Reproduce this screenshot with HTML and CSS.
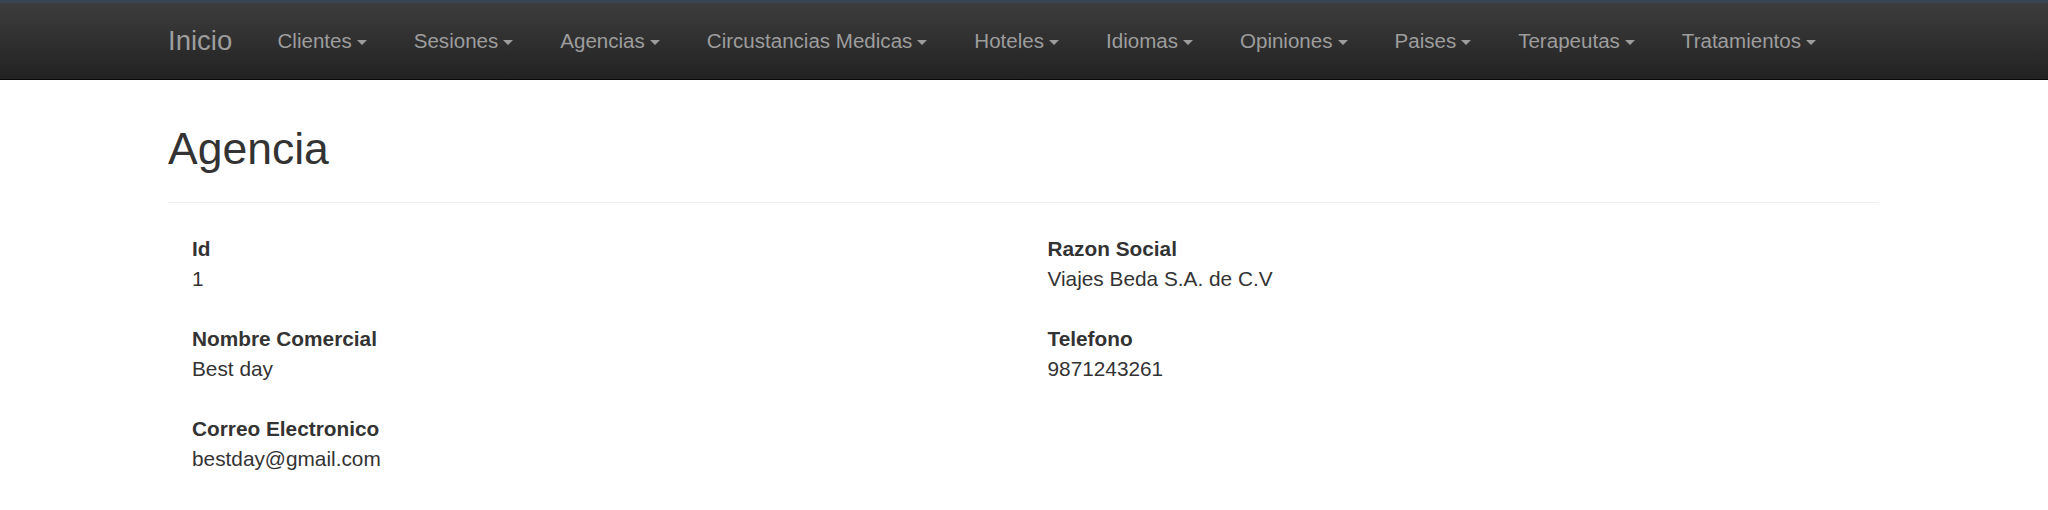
FILE: index.html
```html
<!DOCTYPE html>
<html lang="es">
<head>
<meta charset="utf-8">
<title>Agencia</title>
<link rel="stylesheet" href="styles.css">
</head>
<body>
<div class="topbar"></div>
<nav class="navbar">
  <div class="nav-inner">
    <a class="brand" href="#">Inicio</a>
    <ul class="nav">
      <li><a href="#">Clientes<span class="caret"></span></a></li>
      <li><a href="#">Sesiones<span class="caret"></span></a></li>
      <li><a href="#">Agencias<span class="caret"></span></a></li>
      <li><a href="#">Circustancias Medicas<span class="caret"></span></a></li>
      <li><a href="#">Hoteles<span class="caret"></span></a></li>
      <li><a href="#">Idiomas<span class="caret"></span></a></li>
      <li><a href="#">Opiniones<span class="caret"></span></a></li>
      <li><a href="#">Paises<span class="caret"></span></a></li>
      <li><a href="#">Terapeutas<span class="caret"></span></a></li>
      <li><a href="#">Tratamientos<span class="caret"></span></a></li>
    </ul>
  </div>
</nav>
<main class="container">
  <div class="page-header"><h1>Agencia</h1></div>
  <div class="details">
    <dl><dt>Id</dt><dd>1</dd></dl>
    <dl><dt>Razon Social</dt><dd>Viajes Beda S.A. de C.V</dd></dl>
    <dl><dt>Nombre Comercial</dt><dd>Best day</dd></dl>
    <dl><dt>Telefono</dt><dd>9871243261</dd></dl>
    <dl><dt>Correo Electronico</dt><dd>bestday@gmail.com</dd></dl>
  </div>
</main>
</body>
</html>
```
FILE: styles.css
```css
body {
  margin: 0;
  font-family: "Liberation Sans", Arial, sans-serif;
  color: #333;
  background: #fff;
}
.topbar {
  height: 3px;
  background: #3a4553;
}
.navbar {
  height: 76px;
  background: linear-gradient(to bottom, #3d3d3d 0, #222 100%);
  border-bottom: 1px solid #080808;
}
.nav-inner {
  display: flex;
  align-items: center;
  height: 100%;
  padding-left: 168px;
}
.brand {
  width: 86px;
  font-size: 27.5px;
  color: #9d9d9d;
  text-decoration: none;
}
.nav {
  display: flex;
  list-style: none;
  margin: 0;
  padding: 0;
}
.nav a {
  display: flex;
  align-items: center;
  gap: 5px;
  padding: 0 23.5px;
  font-size: 20.55px;
  color: #9d9d9d;
  text-decoration: none;
}
.caret {
  width: 0;
  height: 0;
  border-top: 5px solid #9d9d9d;
  border-left: 5px solid transparent;
  border-right: 5px solid transparent;
  margin-top: 3px;
}
.container {
  padding-left: 168px;
  width: 1711px;
}
.page-header {
  padding: 44px 0 29px;
  border-bottom: 1px solid #eee;
}
.page-header h1 {
  margin: 0;
  font-size: 44.5px;
  line-height: 49px;
  font-weight: 500;
}
.details {
  display: grid;
  grid-template-columns: 1fr 1fr;
  row-gap: 30px;
  padding-top: 31px;
}
.details dl {
  margin: 0;
  padding-left: 24px;
  font-size: 20.8px;
  line-height: 30px;
}
.details dt {
  font-weight: bold;
}
.details dd {
  margin: 0;
}
```
